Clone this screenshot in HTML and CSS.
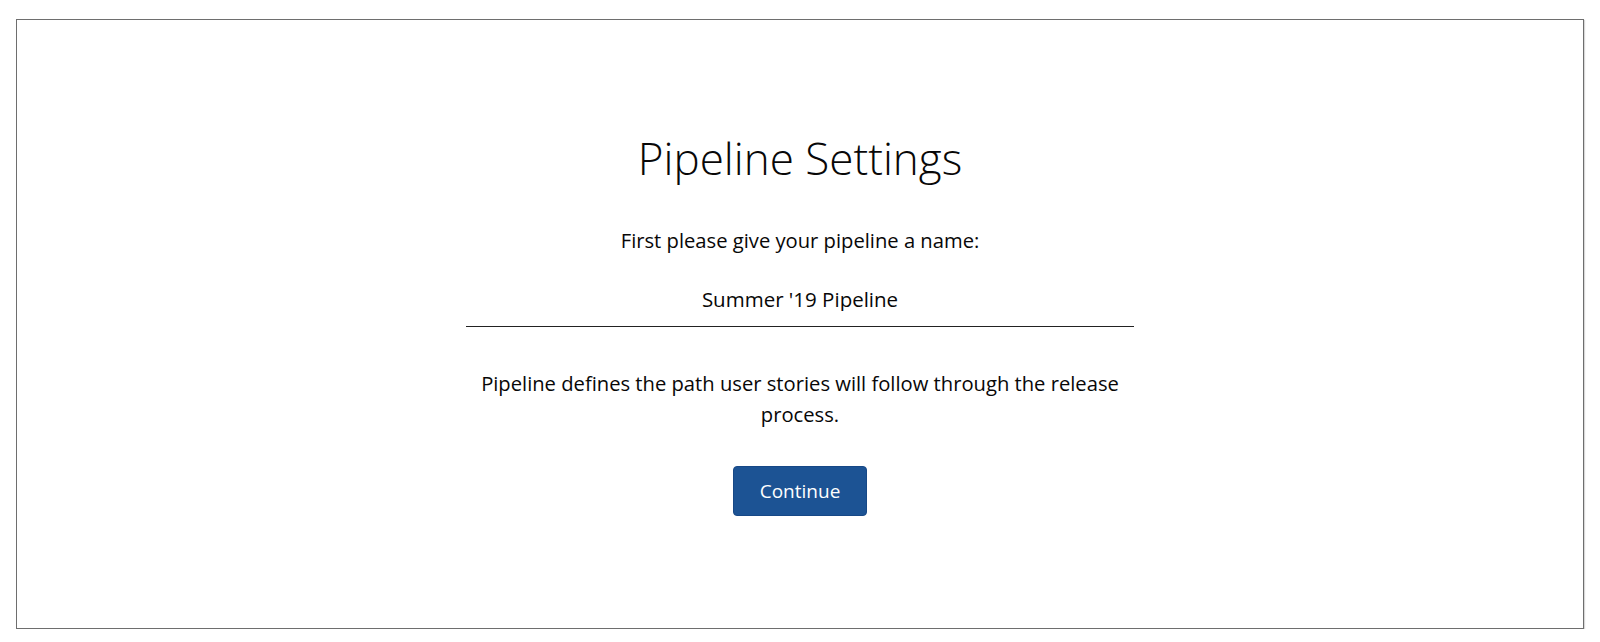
FILE: index.html
```html
<!DOCTYPE html>
<html lang="en">
<head>
  <meta charset="UTF-8">
  <meta name="viewport" content="width=device-width, initial-scale=1.0">
  <title>Pipeline Settings</title>
  <link rel="stylesheet" href="styles.css">
</head>
<body>
  <div class="frame">
    <div class="setup">
      <h1>Pipeline Settings</h1>
      <label for="pipelineName" class="prompt">First please give your pipeline a name:</label>
      <input type="text" id="pipelineName" class="name-input" value="Summer '19 Pipeline">
      <p class="hint">Pipeline defines the path user stories will follow through the release process.</p>
      <button class="continue">Continue</button>
    </div>
  </div>
</body>
</html>
```

FILE: styles.css
```css
body {
  font-family: 'Open Sans', 'Liberation Sans', sans-serif;
  background-color: #fff;
  color: #080707;
  margin: 0;
  padding: 0;
}

.frame {
  margin: 19px 16px 0 16px;
  height: 608px;
  border: 1px solid #6e6e6e;
  box-shadow: 1px 1px 1px rgba(0, 0, 0, 0.15);
}

.setup {
  width: 668px;
  margin: 0 auto;
  padding-top: 110px;
  display: flex;
  flex-direction: column;
  align-items: center;
  text-align: center;
}

h1 {
  font-size: 44px;
  font-weight: 300;
  line-height: 56px;
  margin: 0;
}

.prompt {
  font-size: 20.2px;
  line-height: 24px;
  margin-top: 42px;
}

.name-input {
  width: 100%;
  box-sizing: border-box;
  margin-top: 35px;
  padding: 0 0 15px;
  border: none;
  border-bottom: 1px solid #222;
  font-family: inherit;
  font-size: 20.5px;
  line-height: 24px;
  color: #080707;
  text-align: center;
  outline: none;
}

.hint {
  font-size: 20.2px;
  line-height: 31px;
  margin: 41px 0 0;
}

.continue {
  margin-top: 36px;
  width: 134px;
  height: 50px;
  background-color: #1c5394;
  border: 1px solid #174886;
  border-radius: 4px;
  color: white;
  font-family: inherit;
  font-size: 19px;
  cursor: pointer;
}
```
